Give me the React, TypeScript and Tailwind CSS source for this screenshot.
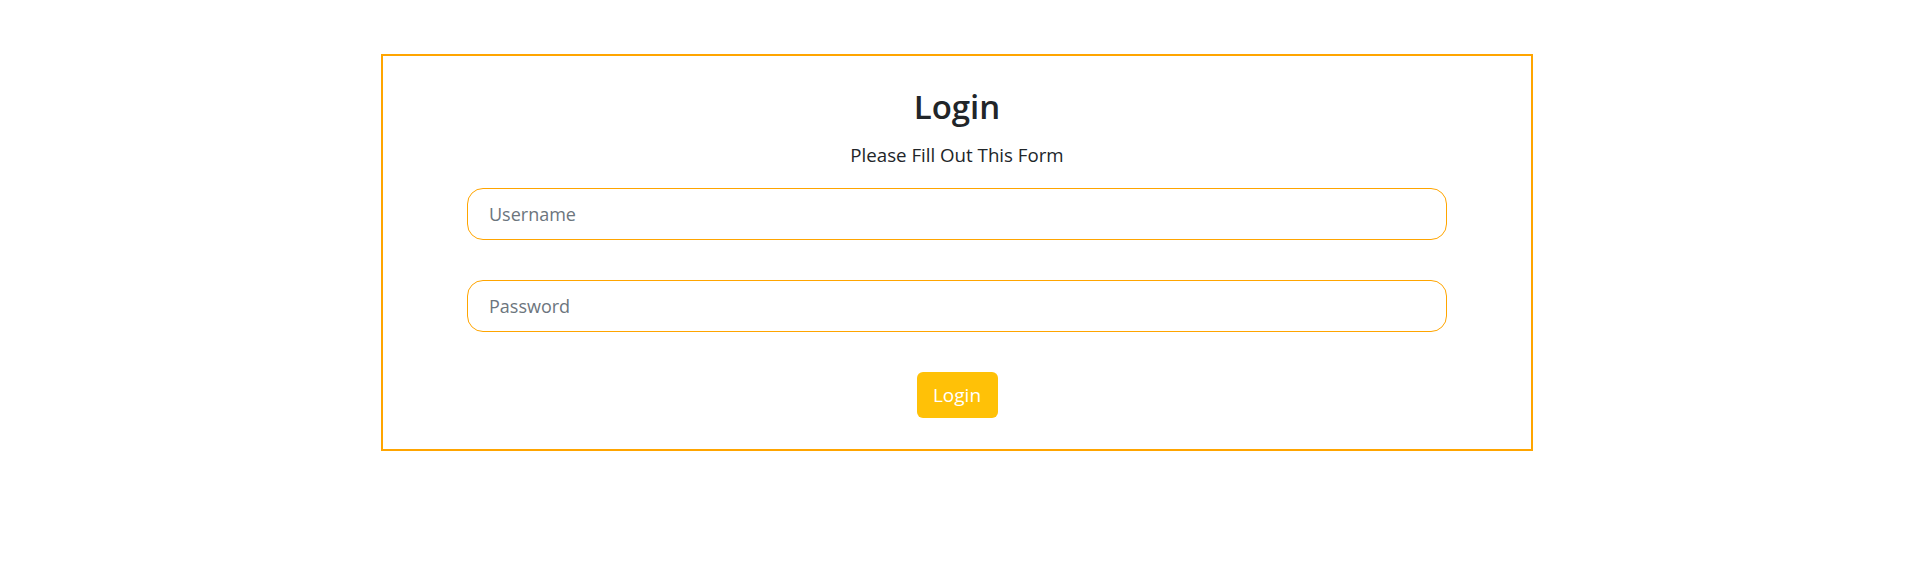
import React, { useState } from "react";

const App = () => {
  const [username, setUsername] = useState("");
  const [password, setPassword] = useState("");

  return (
    <div
      className="w-full min-h-[587px] bg-white pt-[54px]"
      style={{ fontFamily: '"Open Sans", "Noto Sans", sans-serif' }}
    >
      <form
        className="ml-[381px] w-[1152px] border-2 border-[#ffa500] px-[84px] pt-[32px] pb-[31px] flex flex-col items-center"
        onSubmit={(e) => e.preventDefault()}
      >
        <h2 className="text-[33px] leading-[38px] font-semibold text-[#212529]">Login</h2>
        <p className="mt-[15px] text-[18.7px] leading-[27px] text-[#212529]">Please Fill Out This Form</p>

        <input
          className="mt-[20px] w-full h-[52px] rounded-[16px] border border-[#ffa500] pl-[21px] pr-4 text-[18px] text-[#212529] placeholder:text-[#6c757d] outline-none"
          placeholder="Username"
          value={username}
          onChange={(e) => setUsername(e.target.value)}
        />
        <input
          type="password"
          className="mt-[40px] w-full h-[52px] rounded-[16px] border border-[#ffa500] pl-[21px] pr-4 text-[18px] text-[#212529] placeholder:text-[#6c757d] outline-none"
          placeholder="Password"
          value={password}
          onChange={(e) => setPassword(e.target.value)}
        />

        <button
          type="submit"
          className="mt-[40px] w-[81px] h-[46px] rounded-[6px] bg-[#ffc107] text-white text-[19px]"
        >
          Login
        </button>
      </form>
    </div>
  );
};

export default App;
